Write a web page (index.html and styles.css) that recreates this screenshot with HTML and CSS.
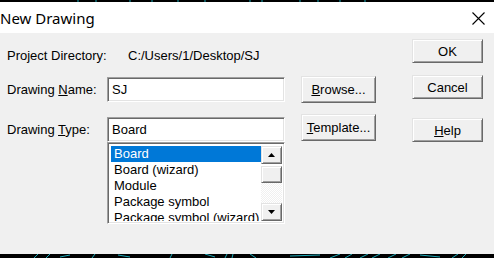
FILE: index.html
```html
<!DOCTYPE html>
<html>
<head>
<meta charset="utf-8">
<link rel="stylesheet" href="styles.css">
</head>
<body>
<div class="top-strip">
  <svg width="494" height="2" viewBox="0 0 494 2"><path d="M78 0v2M96 0v2M130 0v2M152 0v2M178 0v2M205 0v2M250 0v2M262 0v2M300 0v2M318 0v2M340 0v2M365 0v2" stroke="#1aa7b5" stroke-width="1"/></svg>
</div>
<div class="titlebar">
  <span class="title">New Drawing</span>
  <svg class="close" width="13" height="13" viewBox="0 0 13 13"><path d="M0.5 0.5L12.5 12.5M12.5 0.5L0.5 12.5" stroke="#000" stroke-width="1.1"/></svg>
</div>
<div class="dialog">
  <div class="form">
    <div class="row row-dir">
      <span class="label">Project Directory:</span>
      <span class="value">C:/Users/1/Desktop/SJ</span>
    </div>
    <div class="row row-name">
      <span class="label">Drawing <u>N</u>ame:</span>
      <div class="field">SJ</div>
      <div class="btn btn-side"><span><u>B</u>rowse...</span></div>
    </div>
    <div class="row row-type">
      <span class="label label-type">Drawing <u>T</u>ype:</span>
      <div class="type-col">
        <div class="field field-type">Board</div>
        <div class="list">
          <div class="items">
            <div class="item selected">Board</div>
            <div class="item">Board (wizard)</div>
            <div class="item">Module</div>
            <div class="item">Package symbol</div>
            <div class="item">Package symbol (wizard)</div>
          </div>
          <div class="scroll">
            <div class="sbtn"><svg width="7" height="4" viewBox="0 0 7 4"><path d="M3.5 0L7 4H0Z" fill="#000"/></svg></div>
            <div class="thumb"></div>
            <div class="track"></div>
            <div class="sbtn"><svg width="7" height="4" viewBox="0 0 7 4"><path d="M0 0H7L3.5 4Z" fill="#000"/></svg></div>
          </div>
        </div>
      </div>
      <div class="btn btn-side"><span><u>T</u>emplate...</span></div>
    </div>
  </div>
  <div class="side">
    <div class="btn btn-ok">OK</div>
    <div class="btn btn-cancel">Cancel</div>
    <div class="btn btn-help"><span><u>H</u>elp</span></div>
  </div>
</div>
<div class="bottom-strip">
  <svg width="494" height="4" viewBox="0 0 494 4"><path d="M34 4L38 0M46 4L50 0M60 3L70 1M92 4L95 0M118 1L130 3M170 4L172 0M205 0L215 3M225 4L227 0M232 4L233 0M250 0L256 4M290 2L320 1M330 4L340 0M345 4L352 0M360 4L368 0M372 4L380 0M388 4L396 0M402 4L410 0M420 1L440 3M452 4L458 0M462 4L466 0" stroke="#1aa7b5" stroke-width="1"/></svg>
</div>
</body>
</html>
```

FILE: styles.css
```css
* { box-sizing: border-box; }
html, body { margin: 0; padding: 0; }
body {
  width: 494px;
  height: 258px;
  overflow: hidden;
  background: #000;
  font-family: "Liberation Sans", Arial, sans-serif;
  font-size: 13px;
  color: #000;
}
u { text-decoration: underline; text-underline-offset: 1px; text-decoration-thickness: 1px; }

.top-strip { height: 2px; background: #000; }
.top-strip svg, .bottom-strip svg { display: block; }

.titlebar {
  height: 31px;
  background: #fff;
  display: flex;
  align-items: center;
  padding-left: 0;
}
.title {
  font-family: "Noto Sans", "Open Sans", sans-serif;
  font-size: 15px;
  line-height: 20px;
}
.close { margin-left: auto; margin-right: 9px; margin-top: 1px; }

.dialog {
  height: 221px;
  background: #f0f0f0;
  display: flex;
}
.form { padding-left: 7px; }
.row { display: flex; }
.label { width: 100px; line-height: 15px; white-space: nowrap; }
.row-dir { margin-top: 15px; height: 15px; }
.value { margin-left: 21px; line-height: 15px; }
.row-name { margin-top: 13px; height: 27px; align-items: center; }
.row-type { margin-top: 11px; align-items: flex-start; }
.label-type { margin-top: 8px; }

.field {
  width: 178px;
  height: 25px;
  background: #fff;
  border: 1px solid;
  border-color: #a0a0a0 #fff #fff #a0a0a0;
  box-shadow: inset 1px 1px 0 #696969, inset -1px -1px 0 #e3e3e3;
  padding: 4px 0 0 4px;
  line-height: 15px;
}
.field-type { margin-top: 3px; }

.btn {
  background: #f0f0f0;
  border: 1px solid;
  border-color: #e3e3e3 #696969 #696969 #e3e3e3;
  box-shadow: inset 1px 1px 0 #fff, inset -1px -1px 0 #a0a0a0;
  display: flex;
  align-items: center;
  justify-content: center;
  line-height: 15px;
}
.btn-side { width: 75px; height: 27px; margin-left: 16px; }

.list {
  width: 178px;
  height: 82px;
  background: #fff;
  border: 1px solid;
  border-color: #a0a0a0 #fff #fff #a0a0a0;
  box-shadow: inset 1px 1px 0 #696969, inset -1px -1px 0 #e3e3e3;
  padding: 3px 2px 2px 3px;
  display: flex;
  overflow: hidden;
}
.items { flex: 1; overflow: hidden; }
.item { height: 16px; line-height: 16px; padding-left: 3px; white-space: nowrap; }
.item.selected { background: #0078d7; color: #fff; }

.scroll {
  width: 21px;
  display: flex;
  flex-direction: column;
}
.sbtn, .thumb {
  background: #f0f0f0;
  border: 1px solid;
  border-color: #e3e3e3 #696969 #696969 #e3e3e3;
  box-shadow: inset 1px 1px 0 #fff, inset -1px -1px 0 #a0a0a0;
}
.sbtn { height: 18px; display: flex; align-items: center; justify-content: center; }
.thumb { height: 17px; margin-top: 2px; }
.track {
  flex: 1;
  background: repeating-conic-gradient(#f0f0f0 0 25%, #fff 0 50%) 0 0 / 2px 2px;
}

.side {
  margin-left: auto;
  margin-right: 11px;
  width: 71px;
  display: flex;
  flex-direction: column;
}
.side .btn { height: 24px; }
.btn-ok { margin-top: 6px; }
.btn-cancel { margin-top: 12px; }
.btn-help { margin-top: 19px; }

.bottom-strip { height: 4px; background: #000; }
```
